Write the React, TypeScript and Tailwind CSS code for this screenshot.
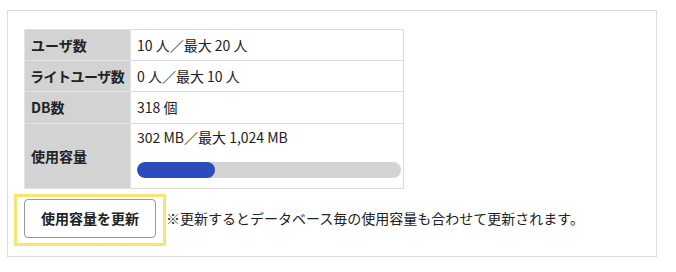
const font = { fontFamily: '"Noto Sans CJK JP", "Noto Sans", sans-serif' };

export default function App() {
  const used = 302;
  const max = 1024;
  return (
    <div className="bg-white w-[676px] h-[272px] pt-[10px] pl-[7px]" style={font}>
      <div className="w-[650px] h-[247px] border border-[#dcdcdc] pt-[18px] pl-[16px] text-[14px] text-[#222]">
        <table className="w-[380px] table-fixed border-collapse border border-[#dcdcdc]">
          <colgroup>
            <col className="w-[106px]" />
            <col />
          </colgroup>
          <tbody>
            <tr className="h-[31px]">
              <th className="bg-[#d3d3d3] border border-[#e4e4e4] px-[6px] text-left font-bold">ユーザ数</th>
              <td className="border border-[#dcdcdc] px-[6px]">10 人／最大 20 人</td>
            </tr>
            <tr className="h-[31px]">
              <th className="bg-[#d3d3d3] border border-[#e4e4e4] px-[5px] text-left font-bold whitespace-nowrap tracking-[-0.5px]">ライトユーザ数</th>
              <td className="border border-[#dcdcdc] px-[6px]">0 人／最大 10 人</td>
            </tr>
            <tr className="h-[32px]">
              <th className="bg-[#d3d3d3] border border-[#e4e4e4] px-[6px] text-left font-bold">DB数</th>
              <td className="border border-[#dcdcdc] px-[6px]">318 個</td>
            </tr>
            <tr className="h-[65px]">
              <th className="bg-[#d3d3d3] border border-[#e4e4e4] px-[6px] text-left font-bold">使用容量</th>
              <td className="border border-[#dcdcdc] px-[6px] pt-[3px] pb-[10px] align-top">
                <div className="leading-[20px]">302 MB／最大 1,024 MB</div>
                <div className="mt-[15px] h-[16px] w-[264px] rounded-full bg-[#d4d4d4] overflow-hidden">
                  <div className="h-full rounded-full bg-[#2c4bbf]" style={{ width: `${(used / max) * 100}%` }} />
                </div>
              </td>
            </tr>
          </tbody>
        </table>
        <div className="mt-[5px] -ml-[10px] flex items-center">
          <div className="border-[3px] border-[#f7e56d] pt-[2px] pb-[5px] px-[7px]">
            <button
              type="button"
              className="w-[132px] h-[39px] rounded-[4px] border border-[#999] bg-white font-bold text-[14px] text-[#222]"
              style={font}
            >
              使用容量を更新
            </button>
          </div>
          <span className="-mt-[3px]">※更新するとデータベース毎の使用容量も合わせて更新されます。</span>
        </div>
      </div>
    </div>
  );
}
